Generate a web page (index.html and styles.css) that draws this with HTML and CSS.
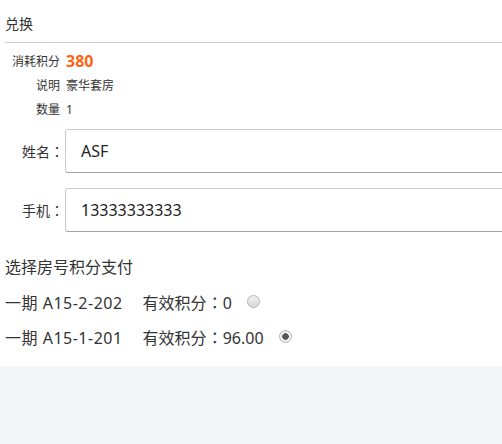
FILE: index.html
```html
<!DOCTYPE html>
<html lang="zh-CN">
<head>
<meta charset="utf-8">
<title>兑换</title>
<link rel="stylesheet" href="styles.css">
</head>
<body>
<div class="page">
  <div class="header">兑换</div>
  <div class="info">
    <div class="info-row"><span class="info-label">消耗积分</span><span class="points">380</span></div>
    <div class="info-row"><span class="info-label">说明</span><span class="info-value">豪华套房</span></div>
    <div class="info-row"><span class="info-label">数量</span><span class="info-value">1</span></div>
  </div>
  <div class="form">
    <div class="form-row"><label class="form-label">姓名<span class="colon" lang="ja">：</span></label><input class="form-input" type="text" value="ASF"></div>
    <div class="form-row"><label class="form-label">手机<span class="colon" lang="ja">：</span></label><input class="form-input" type="text" value="13333333333"></div>
  </div>
  <div class="rooms">
    <div class="rooms-title">选择房号积分支付</div>
    <label class="room-row"><span class="room-name">一期 A15-2-202</span><span class="room-points">有效积分<span class="colon" lang="ja">：</span>0</span><input class="radio" type="radio" name="room"></label>
    <label class="room-row"><span class="room-name">一期 A15-1-201</span><span class="room-points">有效积分<span class="colon" lang="ja">：</span>96.00</span><input class="radio" type="radio" name="room" checked></label>
  </div>
  <div class="footer-fill"></div>
</div>
</body>
</html>
```
FILE: styles.css
```css
html, body {
  margin: 0;
  padding: 0;
}
body {
  width: 502px;
  height: 444px;
  overflow: hidden;
  background: #f4f5f9;
  font-family: "Noto Sans", "Noto Sans CJK SC", sans-serif;
  color: #333;
}
.page {
  background: #fff;
  display: flex;
  flex-direction: column;
}
.header {
  margin-left: 5px;
  box-sizing: border-box;
  padding-top: 14px;
  line-height: 20px;
  font-size: 14px;
  border-bottom: 1px solid #ccc;
  height: 43px;
}
.info {
  padding-top: 6px;
  display: flex;
  flex-direction: column;
}
.info-row {
  display: flex;
  align-items: center;
  height: 24px;
  font-size: 12px;
}
.info-label {
  width: 48px;
  margin-left: 12px;
  text-align: right;
  margin-right: 6px;
}
.points {
  color: #ff6414;
  font-weight: bold;
  font-size: 16px;
}
.colon {
  font-family: "Noto Sans CJK JP", sans-serif;
}
.form {
  margin-top: 8px;
  display: flex;
  flex-direction: column;
  gap: 15px;
}
.form-row {
  display: flex;
  align-items: center;
}
.form-label {
  width: 64px;
  text-align: right;
  font-size: 14px;
  flex: none;
}
.form-input {
  flex: none;
  margin-left: 1px;
  width: 470px;
  height: 44px;
  box-sizing: border-box;
  border: 1px solid #ccc;
  border-bottom-color: #a3a3a3;
  border-radius: 3px;
  padding: 0 0 0 15px;
  font-family: "Noto Sans", "Noto Sans CJK SC", sans-serif;
  font-size: 16px;
  color: #222;
  outline: none;
  background: #fff;
}
.rooms {
  margin-top: 18px;
  padding: 0 5px 12px;
  display: flex;
  flex-direction: column;
}
.rooms-title {
  line-height: 34px;
  font-size: 16px;
}
.room-row {
  display: flex;
  align-items: center;
  height: 35px;
  font-size: 16px;
}
.room-name {
  letter-spacing: 0.5px;
}
.room-points {
  margin-left: 20px;
}
.radio {
  appearance: none;
  -webkit-appearance: none;
  margin: 0 0 0 15px;
  width: 13px;
  height: 13px;
  border-radius: 50%;
  border: 1px solid #b4b4b4;
  background: linear-gradient(#f2f2f2, #d8d8d8);
  box-sizing: border-box;
}
.radio:checked {
  background: radial-gradient(circle, #555 0 3px, #f0f0f0 3.5px);
}
.footer-fill {
  flex: 1;
}
```
